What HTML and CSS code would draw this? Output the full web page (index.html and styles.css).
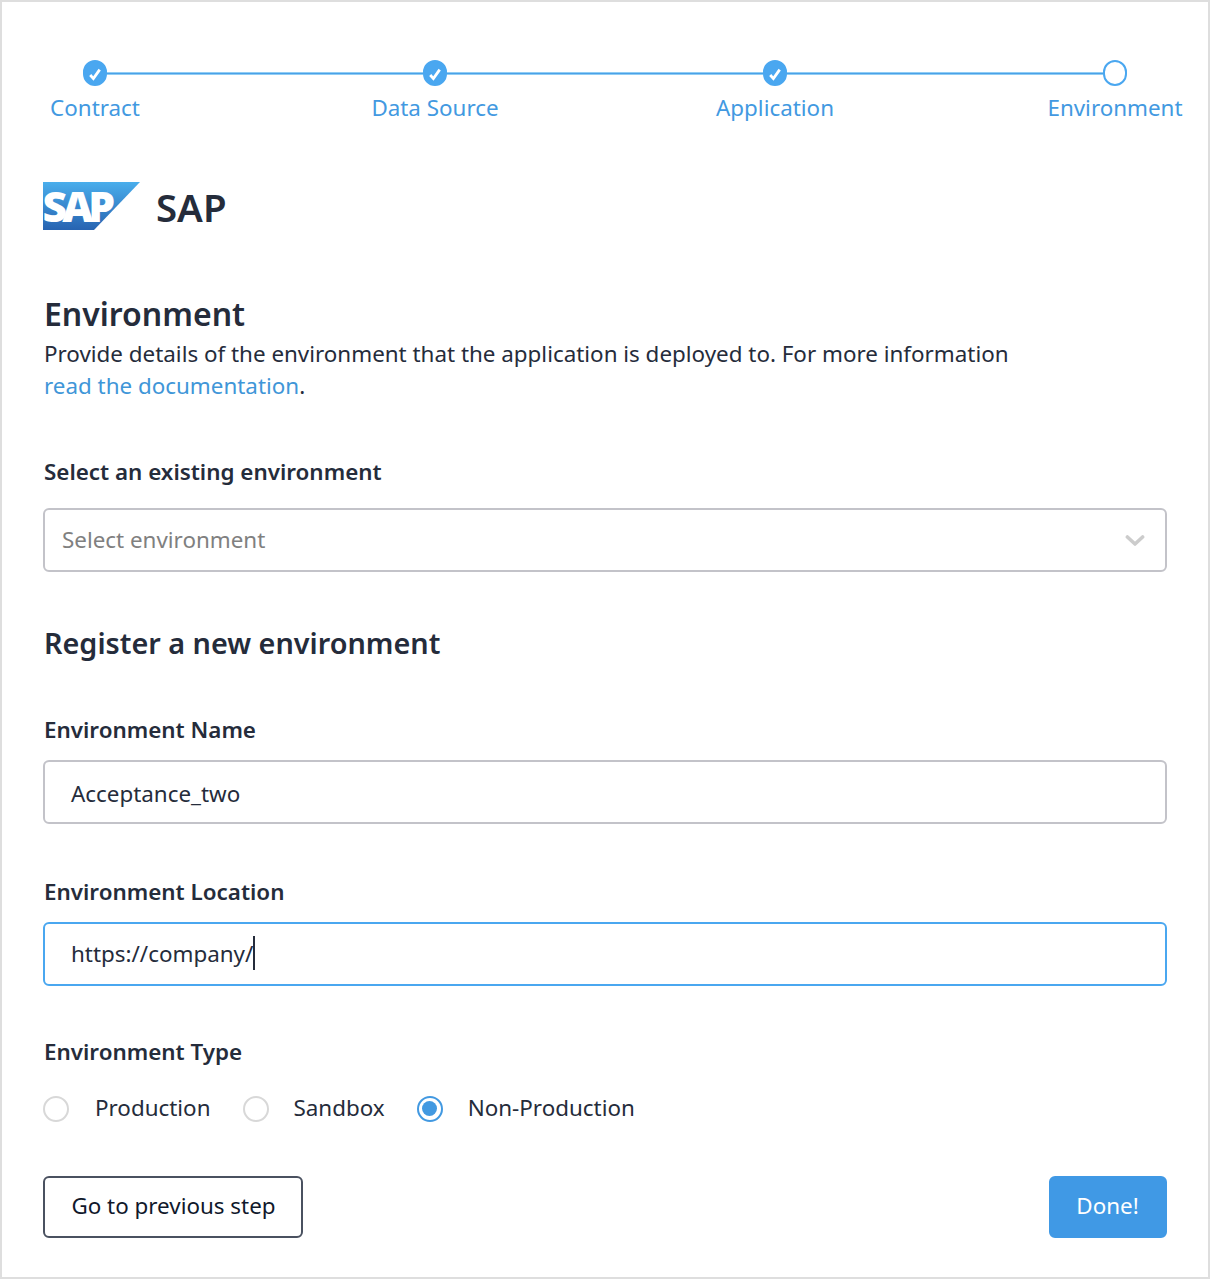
FILE: index.html
```html
<!DOCTYPE html>
<html lang="en">
<head>
<meta charset="utf-8">
<title>Environment</title>
<link rel="stylesheet" href="styles.css">
</head>
<body>
<main class="wizard">
  <nav class="stepper">
    <div class="step"><span class="dot dot-done"><svg width="14" height="14" viewBox="0 0 14 14"><path d="M2.2 8 5.4 11.6 11.7 2.6"/></svg></span><span class="step-label">Contract</span></div>
    <span class="connector"></span>
    <div class="step"><span class="dot dot-done"><svg width="14" height="14" viewBox="0 0 14 14"><path d="M2.2 8 5.4 11.6 11.7 2.6"/></svg></span><span class="step-label">Data Source</span></div>
    <span class="connector"></span>
    <div class="step"><span class="dot dot-done"><svg width="14" height="14" viewBox="0 0 14 14"><path d="M2.2 8 5.4 11.6 11.7 2.6"/></svg></span><span class="step-label">Application</span></div>
    <span class="connector"></span>
    <div class="step"><span class="dot"></span><span class="step-label">Environment</span></div>
  </nav>

  <header class="product">
    <svg class="logo" width="97" height="48" viewBox="0 0 97 48">
      <defs><linearGradient id="sky" x1="0" y1="0" x2="0" y2="1"><stop offset="0" stop-color="#4aaeec"/><stop offset="1" stop-color="#2763b1"/></linearGradient></defs>
      <path d="M0 0H97L51 48H0Z" fill="url(#sky)"/>
      <text class="logo-text" x="-0.5" y="39.8" textLength="72.5" lengthAdjust="spacing">SAP</text>
    </svg>
    <h1 class="product-name">SAP</h1>
  </header>

  <section class="intro">
    <h2 class="title">Environment</h2>
    <p class="lead">Provide details of the environment that the application is deployed to. For more information<br><a class="link" href="#">read the documentation</a>.</p>
  </section>

  <form class="form">
    <div class="label label-select">Select an existing environment</div>
    <div class="field select"><span>Select environment</span>
      <svg class="chevron" width="20" height="12" viewBox="0 0 20 12"><path d="M2.4 2 10 9 17.6 2"/></svg>
    </div>
    <h3 class="subtitle">Register a new environment</h3>
    <div class="label label-name">Environment Name</div>
    <div class="field name">Acceptance_two</div>
    <div class="label label-location">Environment Location</div>
    <div class="field field-active">https://company/<span class="caret"></span></div>
    <div class="label label-type">Environment Type</div>
    <div class="radios">
      <label class="radio"><span class="circle"></span>Production</label>
      <label class="radio"><span class="circle"></span>Sandbox</label>
      <label class="radio"><span class="circle circle-on"></span>Non-Production</label>
    </div>
    <div class="actions">
      <button class="btn btn-outline" type="button">Go to previous step</button>
      <button class="btn btn-primary" type="button">Done!</button>
    </div>
  </form>
</main>
</body>
</html>
```
FILE: styles.css
```css
* { box-sizing: border-box; }

body {
  margin: 0;
  font: 400 22.4px/32px "Noto Sans", sans-serif;
  color: #252c3b;
  background: #fff;
}

h1, h2, h3, p { margin: 0; font-weight: 600; }

.wizard {
  height: 1279px;
  padding: 58px 41px 0;
  border: 2px solid #dedede;
}

.stepper {
  display: flex;
  align-items: flex-start;
  height: 64px;
  margin: 0 -18px;
}

.step {
  display: flex;
  flex: none;
  flex-direction: column;
  align-items: center;
  width: 140px;
}

.dot {
  display: flex;
  align-items: center;
  justify-content: center;
  width: 24px;
  height: 26px;
  border: 2px solid #4aa7f0;
  border-radius: 12px;
}

.dot-done { background: #4aa7f0; }
.dot svg { flex: none; margin-top: 2px; fill: none; stroke: #fff; stroke-width: 2.8; }

.step-label { margin-top: 6px; color: #4299e1; white-space: nowrap; }

.connector {
  flex: 1;
  height: 3px;
  margin: 12px -58px 0;
  background: linear-gradient(#90cdf4 1px, #4aa1e8 1px, #4aa1e8 2px, #90cdf4 2px);
}

.product { display: flex; align-items: center; height: 48px; margin-top: 58px; }
.logo { overflow: visible; }
.logo-text { font: 900 42.5px "Noto Sans", sans-serif; fill: #fff; }
.product-name { margin: 2px 0 0 16px; font-size: 38.4px; line-height: 52px; }

.intro { margin-top: 64px; padding-left: 1px; }
.title { font-size: 32px; line-height: 40px; }
.lead { margin-top: 4px; font-weight: 400; }
.link { color: #4096d8; text-decoration: none; }

.label { padding-left: 1px; font-weight: 600; }
.label-select { margin-top: 54px; }

.field {
  display: flex;
  align-items: center;
  height: 64px;
  padding: 0 26px;
  border: 2px solid #c3c3c9;
  border-radius: 6px;
}

.field-active { border-color: #4aa7f0; }
.select { justify-content: space-between; margin-top: 20px; padding: 0 20px 0 17px; color: #808080; }
.chevron { margin-top: 2px; fill: none; stroke: #ccc; stroke-width: 3.6; stroke-linecap: round; stroke-linejoin: round; }
.subtitle { margin-top: 51px; padding-left: 1px; font-size: 28.8px; line-height: 40px; }
.label-name { margin-top: 51px; }
.name { margin-top: 14px; padding-top: 3px; }
.label-location { margin-top: 52px; }
.label-location + .field { margin-top: 14px; }
.caret { width: 2px; height: 34px; margin-top: -2px; background: #252c3b; }
.label-type { margin-top: 50px; }

.radios { display: flex; gap: 32px; margin-top: 24px; }
.radio { display: flex; align-items: center; gap: 25px; }
.radio:first-child { gap: 26px; }
.circle { width: 26px; height: 26px; margin-top: 2px; border: 2px solid #d8d8d8; border-radius: 50%; }
.circle-on { display: flex; padding: 3px; border-color: #4299e1; }
.circle-on::before { content: ""; width: 15px; height: 15px; border-radius: 50%; background: #4299e1; }

.actions { display: flex; justify-content: space-between; margin-top: 52px; }

.btn {
  height: 62px;
  padding: 0 0 2px;
  border: 2px solid #4a5160;
  border-radius: 6px;
  font: inherit;
  background: #fff;
}

.btn-outline { width: 260px; padding-left: 1px; color: #10182b; }
.btn-primary { width: 118px; padding-right: 1px; border-color: #4099e5; color: #fff; background: #4099e5; }
```
